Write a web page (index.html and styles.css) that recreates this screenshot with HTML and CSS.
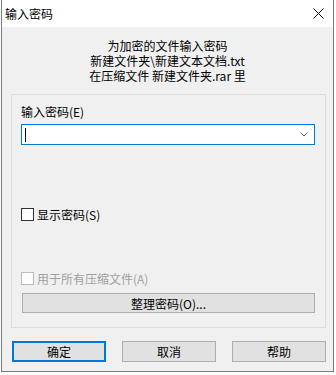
FILE: index.html
```html
<!DOCTYPE html>
<html lang="zh-CN">
<head>
    <meta charset="UTF-8">
    <title>输入密码</title>
    <link rel="stylesheet" href="styles.css">
</head>
<body>
    <div class="window">
        <div class="titlebar">
            <span class="title">输入密码</span>
            <svg class="close" width="11" height="11" viewBox="0 0 11 11">
                <path d="M0.5 0.5 L10.5 10.5 M10.5 0.5 L0.5 10.5" stroke="#000" stroke-width="1" fill="none"/>
            </svg>
        </div>
        <div class="content">
            <div class="info">
                <div>为加密的文件输入密码</div>
                <div>新建文件夹\新建文本文档.txt</div>
                <div>在压缩文件 新建文件夹.rar 里</div>
            </div>
            <div class="group">
                <div class="label">输入密码(E)</div>
                <div class="combo">
                    <span class="caret"></span>
                    <svg class="chevron" width="8" height="5" viewBox="0 0 8 5">
                        <path d="M0.5 0.5 L4 4 L7.5 0.5" stroke="#606060" stroke-width="1" fill="none"/>
                    </svg>
                </div>
                <label class="check show-pass">
                    <span class="box"></span>显示密码(S)
                </label>
                <label class="check disabled">
                    <span class="box"></span>用于所有压缩文件(A)
                </label>
                <button class="btn wide">整理密码(O)...</button>
            </div>
            <div class="actions">
                <button class="btn default">确定</button>
                <button class="btn">取消</button>
                <button class="btn">帮助</button>
            </div>
        </div>
    </div>
</body>
</html>
```

FILE: styles.css
```css
body {
    margin: 0;
    background: #fff;
    font-family: "Noto Sans CJK SC", "Noto Sans", sans-serif;
    font-size: 12px;
    color: #000;
}
.window {
    width: 331px;
    height: 371px;
    margin-left: 1px;
    border: 1px solid #7a7a7a;
    border-top: none;
    display: flex;
    flex-direction: column;
    background: #f0f0f0;
}
.titlebar {
    height: 27px;
    background: #fff;
    display: flex;
    align-items: center;
    justify-content: space-between;
    padding: 0 9px 0 3px;
}
.title {
    line-height: 15px;
    margin-top: -1px;
}
.close {
    margin-top: -1px;
}
.content {
    flex: 1;
    padding-top: 11px;
}
.info {
    text-align: center;
    line-height: 15px;
}
.group {
    margin: 11px 7px 0 9px;
    border: 1px solid #dcdcdc;
    padding: 9px 10px 14px 9px;
}
.label {
    line-height: 15px;
}
.combo {
    margin-top: 5px;
    height: 21px;
    width: 294px;
    box-sizing: border-box;
    border: 1px solid #0078d7;
    background: #fff;
    display: flex;
    align-items: center;
    justify-content: space-between;
    padding: 0 6px 0 3px;
}
.caret {
    width: 1px;
    height: 14px;
    background: #000;
}
.check {
    display: flex;
    align-items: center;
    line-height: 15px;
    height: 15px;
}
.check .box {
    width: 13px;
    height: 13px;
    box-sizing: border-box;
    border: 1px solid #333;
    background: #fff;
    margin-right: 3px;
}
.show-pass {
    margin-top: 62px;
}
.disabled {
    margin-top: 49px;
    color: #a0a0a0;
}
.disabled .box {
    border-color: #bcbcbc;
}
.btn {
    font-family: inherit;
    font-size: 12px;
    color: #000;
    background: #e1e1e1;
    border: 1px solid #adadad;
    box-sizing: border-box;
    padding: 0;
    line-height: 15px;
}
.wide {
    display: block;
    margin: 7px 0 0 1px;
    width: 293px;
    height: 20px;
}
.actions {
    display: flex;
    gap: 16px;
    margin: 13px 0 0 10px;
}
.actions .btn {
    width: 94px;
    height: 21px;
}
.default {
    border: 2px solid #0078d7;
}
```
